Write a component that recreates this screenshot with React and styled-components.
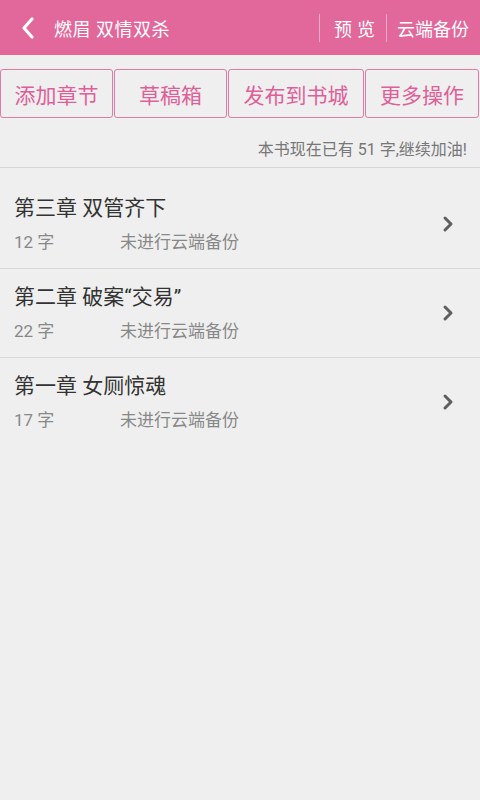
import React from "react";
import styled, { createGlobalStyle } from "styled-components";

const GlobalStyle = createGlobalStyle`
  html, body {
    margin: 0;
    padding: 0;
    background: #efefef;
    font-family: Roboto, "Noto Sans CJK SC", "Noto Sans", sans-serif;
  }
`;

const Page = styled.div`
  width: 480px;
  min-height: 800px;
  background: #efefef;
`;

const Header = styled.div`
  height: 55px;
  background: #e2679a;
  display: flex;
  align-items: center;
  color: #fff;
`;

const Back = styled.div`
  width: 54px;
  display: flex;
  justify-content: center;
  align-items: center;
  padding-left: 2px;
  box-sizing: border-box;
`;

const Title = styled.div`
  flex: 1;
  font-size: 18px;
  letter-spacing: 0.5px;
`;

const HeaderAction = styled.div`
  width: ${(p) => p.w}px;
  box-sizing: border-box;
  height: 28px;
  display: flex;
  align-items: center;
  border-left: 1px solid rgba(255, 255, 255, 0.45);
  padding-left: ${(p) => p.left}px;
  font-size: 18px;
  letter-spacing: ${(p) => p.spacing || 0}px;
`;

const ButtonRow = styled.div`
  display: flex;
  margin-top: 14px;
  gap: 1px;
`;

const ActionButton = styled.div`
  width: ${(p) => p.w}px;
  height: 49px;
  box-sizing: border-box;
  border: 1.5px solid #e07aa8;
  border-radius: 3px;
  display: flex;
  justify-content: center;
  align-items: center;
  color: #e05f99;
  font-size: 21px;
`;

const Info = styled.div`
  margin-top: 21px;
  padding: 0 13px 6px 0;
  text-align: right;
  font-size: 16px;
  line-height: 22px;
  color: #777;
  border-bottom: 1px solid #d6d6d6;
`;

const List = styled.div`
  padding-top: 12px;
`;

const Row = styled.div`
  display: flex;
  align-items: center;
  padding: 14px 0 15px 14px;
  border-bottom: ${(p) => (p.last ? "none" : "1px solid #d9d9d9")};
`;

const RowText = styled.div`
  flex: 1;
`;

const ChapterTitle = styled.div`
  font-size: 21px;
  line-height: 28px;
  color: #333;
`;

const Meta = styled.div`
  margin-top: 9px;
  display: flex;
  font-size: 17px;
  line-height: 22px;
  color: #888;
`;

const Count = styled.span`
  width: 106px;
`;

const Chevron = styled.div`
  width: 38px;
  display: flex;
  justify-content: flex-start;
`;

const chapters = [
  { title: "第三章 双管齐下", count: "12 字" },
  { title: "第二章 破案“交易”", count: "22 字" },
  { title: "第一章 女厕惊魂", count: "17 字" },
];

export default function App() {
  return (
    <Page>
      <GlobalStyle />
      <Header>
        <Back>
          <svg width="14" height="24" viewBox="0 0 14 24">
            <path
              d="M11 3 L3 12 L11 21"
              fill="none"
              stroke="#fff"
              strokeWidth="3.2"
              strokeLinecap="round"
              strokeLinejoin="round"
            />
          </svg>
        </Back>
        <Title>燃眉 双情双杀</Title>
        <HeaderAction w={67} left={14} spacing={5}>预览</HeaderAction>
        <HeaderAction w={94} left={10}>云端备份</HeaderAction>
      </Header>
      <ButtonRow>
        <ActionButton w={113}>添加章节</ActionButton>
        <ActionButton w={113}>草稿箱</ActionButton>
        <ActionButton w={136}>发布到书城</ActionButton>
        <ActionButton w={114}>更多操作</ActionButton>
      </ButtonRow>
      <Info>本书现在已有 51 字,继续加油!</Info>
      <List>
        {chapters.map((c, i) => (
          <Row key={c.title} last={i === chapters.length - 1}>
            <RowText>
              <ChapterTitle>{c.title}</ChapterTitle>
              <Meta>
                <Count>{c.count}</Count>
                <span>未进行云端备份</span>
              </Meta>
            </RowText>
            <Chevron>
              <svg width="12" height="18" viewBox="0 0 12 18">
                <path
                  d="M3 3 L9 9 L3 15"
                  fill="none"
                  stroke="#5f5f5f"
                  strokeWidth="3"
                  strokeLinecap="round"
                  strokeLinejoin="round"
                />
              </svg>
            </Chevron>
          </Row>
        ))}
      </List>
    </Page>
  );
}
